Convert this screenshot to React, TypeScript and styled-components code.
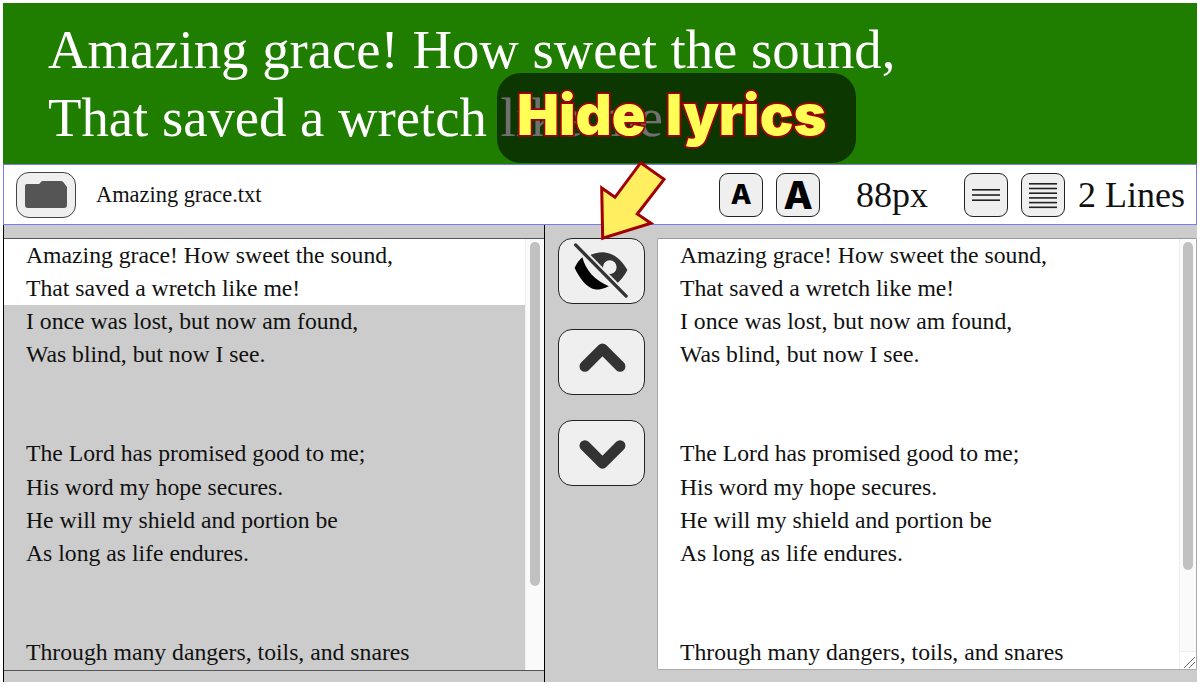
import React from "react";
import styled, { createGlobalStyle } from "styled-components";

const Global = createGlobalStyle`
  html, body { margin: 0; padding: 0; background: #fff; }
  body { font-family: "Liberation Serif", "Times New Roman", serif; color: #111; }
  * { box-sizing: border-box; }
`;

const Page = styled.div`
  position: relative;
  width: 1200px;
  height: 685px;
  overflow: hidden;
  padding: 3px 3px 3px 3px;
  display: flex;
  flex-direction: column;
`;

const Stage = styled.div`
  height: 161px;
  background: #1f7d00;
  color: #fff;
  font-size: 54.7px;
  line-height: 68px;
  padding: 13px 0 0 45px;
  white-space: nowrap;
`;

const Toolbar = styled.div`
  height: 61px;
  border: 1px solid #7a7af0;
  background: #fff;
  display: flex;
  align-items: center;
  padding: 0 11px 0 12px;
`;

const Btn = styled.button<{ $w?: number; $h?: number }>`
  width: ${(p) => p.$w ?? 44}px;
  height: ${(p) => p.$h ?? 44}px;
  flex: none;
  padding: 0;
  border: 1px solid #222;
  border-radius: 9px;
  background: #efefef;
  display: flex;
  align-items: center;
  justify-content: center;
  color: #000;
`;

const BigBtn = styled(Btn)`
  border-radius: 14px;
`;

const FolderBtn = styled(Btn)`
  border-radius: 13px;
  border-color: #444;
`;

const FileName = styled.span`
  font-size: 22.4px;
  margin-left: 20px;
  margin-right: auto;
  color: #111;
`;

const Letter = styled.span<{ $size: number }>`
  font-family: Inter, "Liberation Sans", sans-serif;
  font-weight: 800;
  font-size: ${(p) => p.$size}px;
  line-height: 1;
  color: #000;
`;

const SizeGroup = styled.div`
  display: flex;
  gap: 13px;
`;

const Readout = styled.span<{ $ml: number; $mr?: number }>`
  font-size: 36px;
  line-height: 44px;
  margin-left: ${(p) => p.$ml}px;
  margin-right: ${(p) => p.$mr ?? 0}px;
  color: #111;
  white-space: nowrap;
`;

const Main = styled.div`
  flex: 1;
  min-height: 0;
  background: #ccc;
  display: grid;
  grid-template-columns: 542px 112px 1fr;
`;

const LeftColumn = styled.div`
  border-left: 1px solid #000;
  border-right: 1px solid #000;
  padding: 13px 0 11px;
  display: flex;
  min-height: 0;
`;

const LeftPane = styled.div`
  flex: 1;
  display: flex;
  border-top: 1px solid #555;
  border-bottom: 1px solid #555;
  background: #ccc;
  overflow: hidden;
`;

const Lines = styled.div`
  width: 521px;
  flex: none;
  overflow: hidden;
`;

const Line = styled.div<{ $active?: boolean }>`
  height: 33.08px;
  line-height: 33.08px;
  padding-left: 22px;
  font-size: 23.7px;
  white-space: nowrap;
  background: ${(p) => (p.$active ? "#fff" : "transparent")};
`;

const Track = styled.div`
  flex: 1;
  background: #fafafa;
  border-left: 1px solid #eee;
  padding: 3px 4px;
`;

const Thumb = styled.div<{ $h: number }>`
  width: 10px;
  height: ${(p) => p.$h}px;
  border-radius: 5px;
  background: #c1c1c1;
`;

const Controls = styled.div`
  display: flex;
  flex-direction: column;
  align-items: flex-start;
  padding: 13px 0 0 13px;
  gap: 25px;
`;

const RightColumn = styled.div`
  padding: 13px 0 12px;
  display: flex;
  min-height: 0;
`;

const RightPane = styled.div`
  flex: 1;
  display: flex;
  background: #fff;
  border: 1px solid #aaa;
  border-top-color: #999;
  border-radius: 2px;
  overflow: hidden;
  position: relative;
`;

const Text = styled.div`
  flex: 1;
  overflow: hidden;
`;

const RightTrack = styled(Track)`
  flex: none;
  width: 17px;
  padding: 3px 3px;
`;

const Corner = styled.div`
  position: absolute;
  right: 0;
  bottom: 0;
  width: 17px;
  height: 18px;
  border-top: 1px solid #eee;
  border-left: 1px solid #eee;
  background: #fff;
`;

const Grip = styled.svg`
  position: absolute;
  right: 0;
  bottom: 0;
`;

const Callout = styled.div`
  position: absolute;
  left: 497px;
  top: 73px;
  width: 359px;
  height: 90px;
  border-radius: 24px;
  background: rgba(0, 0, 0, 0.56);
  display: flex;
  align-items: center;
  padding-left: 20px;
  padding-bottom: 6px;
`;

const CalloutText = styled.span`
  font-family: Inter, "Liberation Sans", sans-serif;
  font-weight: 900;
  font-size: 56px;
  word-spacing: 9px;
  line-height: 1;
  color: #ffff55;
  -webkit-text-stroke: 3.6px #a00000;
  paint-order: stroke fill;
  white-space: nowrap;
`;

const Arrow = styled.svg`
  position: absolute;
  left: 590px;
  top: 155px;
`;

const verses = [
  "Amazing grace! How sweet the sound,",
  "That saved a wretch like me!",
  "I once was lost, but now am found,",
  "Was blind, but now I see.",
  "",
  "",
  "The Lord has promised good to me;",
  "His word my hope secures.",
  "He will my shield and portion be",
  "As long as life endures.",
  "",
  "",
  "Through many dangers, toils, and snares",
];

const FolderIcon = () => (
  <svg width="42" height="27" viewBox="0 0 42 27">
    <path
      d="M0 5 Q0 3 2 3 H14 L17 0 H36 Q38 0 39 2 L42 6 V24 Q42 27 39 27 H3 Q0 27 0 24 Z"
      fill="#555"
    />
  </svg>
);

const BarsIcon = ({ ys, w }: { ys: number[]; w: number }) => (
  <svg width="36" height="36" viewBox="0 0 36 36">
    {ys.map((y) => (
      <rect key={y} x={18 - w / 2} y={y} width={w} height="1.6" fill="#222" />
    ))}
  </svg>
);

const EyeSlash = () => (
  <svg width="87" height="66" viewBox="0 0 87 66">
    <path
      fillRule="evenodd"
      d="M28 19 C34 15 41 13.5 47 14 C57 15 65 23 70 32 C67 38 63 43 58 47 Z M59 29 A7 7 0 1 0 45 29 A7 7 0 1 0 59 29 Z"
      fill="#333"
    />
    <path
      d="M16 30 Q19 23 24 19 C27 32 37 43 51 48.5 Q44 52 38 52 C28 51 21 40 16 30 Z"
      fill="#000"
    />
    <path d="M15 4 L70 60" stroke="#efefef" strokeWidth="7" />
    <path d="M17 6.3 L68.7 58.7" stroke="#333" strokeWidth="3.4" strokeLinecap="round" />
  </svg>
);

const Chevron = ({ d }: { d: string }) => (
  <svg width="87" height="66" viewBox="0 0 87 66">
    <path d={d} fill="none" stroke="#333" strokeWidth="11" strokeLinecap="round" strokeLinejoin="round" />
  </svg>
);

export default function App() {
  return (
    <Page>
      <Global />
      <Stage>
        <div>Amazing grace! How sweet the sound,</div>
        <div>That saved a wretch like me!</div>
      </Stage>
      <Toolbar>
        <FolderBtn $w={60} $h={46}>
          <FolderIcon />
        </FolderBtn>
        <FileName>Amazing grace.txt</FileName>
        <SizeGroup>
          <Btn>
            <Letter $size={27}>A</Letter>
          </Btn>
          <Btn>
            <Letter $size={38}>A</Letter>
          </Btn>
        </SizeGroup>
        <Readout $ml={36} $mr={36}>
          88px
        </Readout>
        <SizeGroup>
          <Btn>
            <BarsIcon ys={[12, 17.2, 22.4]} w={28} />
          </Btn>
          <Btn>
            <BarsIcon ys={[6, 10.7, 15.4, 20.1, 24.8, 29.5]} w={28} />
          </Btn>
        </SizeGroup>
        <Readout $ml={13}>2 Lines</Readout>
      </Toolbar>
      <Main>
        <LeftColumn>
          <LeftPane>
            <Lines>
              {verses.map((t, i) => (
                <Line key={i} $active={i < 2}>
                  {t || "\u00a0"}
                </Line>
              ))}
            </Lines>
            <Track>
              <Thumb $h={344} />
            </Track>
          </LeftPane>
        </LeftColumn>
        <Controls>
          <BigBtn $w={87} $h={66}>
            <EyeSlash />
          </BigBtn>
          <BigBtn $w={87} $h={66}>
            <Chevron d="M26.5 37.5 L44.5 19.5 L62.5 37.5" />
          </BigBtn>
          <BigBtn $w={87} $h={66}>
            <Chevron d="M26.5 25.5 L44.5 43.5 L62.5 25.5" />
          </BigBtn>
        </Controls>
        <RightColumn>
          <RightPane>
            <Text>
              {verses.map((t, i) => (
                <Line key={i}>{t || "\u00a0"}</Line>
              ))}
            </Text>
            <RightTrack>
              <Thumb $h={328} />
            </RightTrack>
            <Corner />
            <Grip width="14" height="14" viewBox="0 0 14 14">
              <path d="M2 13 L13 2 M7 13 L13 7" stroke="#666" strokeWidth="1" />
            </Grip>
          </RightPane>
        </RightColumn>
      </Main>
      <Callout>
        <CalloutText>Hide lyrics</CalloutText>
      </Callout>
      <Arrow width="84" height="92" viewBox="590 155 84 92">
        <path
          d="M602.7 238.3 L601.7 188 L615 197.3 L640.7 162.7 L664 179.3 L637.3 214 L651 223.3 Z"
          fill="#ffef60"
          stroke="#a00000"
          strokeWidth="3"
        />
      </Arrow>
    </Page>
  );
}
